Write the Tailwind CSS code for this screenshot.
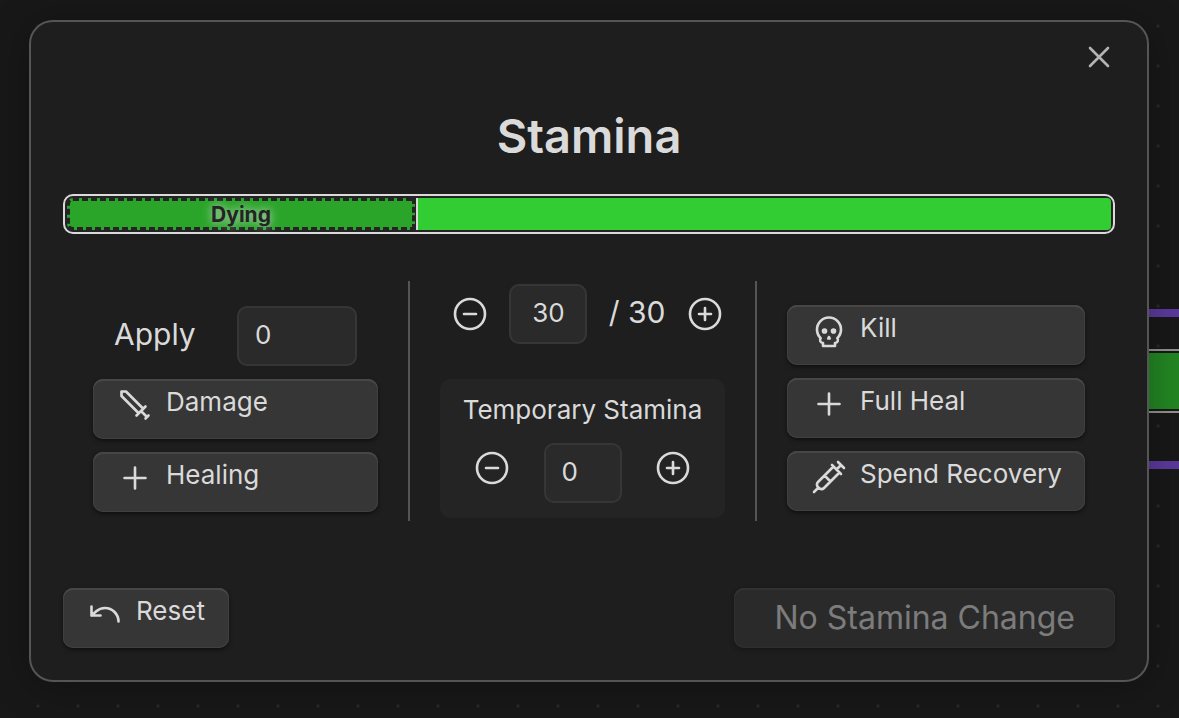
<!DOCTYPE html>
<html lang="en">
<head>
<meta charset="utf-8">
<meta name="viewport" content="width=device-width, initial-scale=1">
<title>Stamina</title>
<script src="https://cdn.jsdelivr.net/npm/@tailwindcss/browser@4"></script>
</head>
<body class="relative min-h-screen overflow-hidden bg-[#181818] pt-5 pr-[30px] pb-9 pl-[29px] font-['Inter',sans-serif] text-[26px] leading-9 text-[#dadada]">
<svg class="hidden" aria-hidden="true">
  <symbol id="plus" viewBox="0 0 24 24"><path d="M5 12h14M12 5v14"/></symbol>
  <symbol id="circle-minus" viewBox="0 0 24 24"><circle cx="12" cy="12" r="10"/><path d="M8 12h8"/></symbol>
  <symbol id="circle-plus" viewBox="0 0 24 24"><circle cx="12" cy="12" r="10"/><path d="M8 12h8M12 8v8"/></symbol>
  <symbol id="x" viewBox="0 0 24 24"><path d="M18 6 6 18M6 6l12 12"/></symbol>
  <symbol id="sword" viewBox="0 0 24 24"><path d="M14.5 17.5 3 6V3h3l11.5 11.5M13 19l6-6M16 16l4 4M19 21l2-2"/></symbol>
  <symbol id="skull" viewBox="0 0 24 24"><circle cx="9" cy="12" r="1"/><circle cx="15" cy="12" r="1"/><path d="M8 20v2h8v-2M12.5 17l-.5-1-.5 1h1zM16 20a2 2 0 0 0 1.56-3.25 8 8 0 1 0-11.12 0A2 2 0 0 0 8 20"/></symbol>
  <symbol id="syringe" viewBox="0 0 24 24"><path d="m18 2 4 4M17 7l3-3M19 9 8.7 19.3c-1 1-2.5 1-3.4 0l-.6-.6c-1-1-1-2.5 0-3.4L15 5M9 11l4 4M5 19l-3 3M14 4l6 6"/></symbol>
  <symbol id="undo" viewBox="0 0 24 24"><path d="M3 7v6h6M21 17a9 9 0 0 0-9-9 9 9 0 0 0-6 2.3L3 13"/></symbol>
</svg>

<!-- Canvas behind the dialog -->
<div class="absolute inset-0 bg-[radial-gradient(circle_at_20px_20px,#2a2a2a_1px,transparent_2px)] bg-size-[40px_40px] bg-position-[18px_6px]" aria-hidden="true">
  <div class="absolute top-[309px] right-0 h-2 w-12 bg-[#5b3a9c]"></div>
  <div class="absolute top-[349px] right-0 h-16 w-12 border-y-2 border-[#919191] py-0.5"><div class="h-full bg-[#238623]"></div></div>
  <div class="absolute top-[461px] right-0 h-2 w-12 bg-[#5b3a9c]"></div>
</div>

<div role="dialog" aria-labelledby="title" class="relative rounded-3xl border-2 border-[#555555] bg-[#1e1e1e] px-8 pt-[17px] pb-8 shadow-[0_4px_40px_rgba(0,0,0,0.3)] [&_svg]:size-9 [&_svg]:shrink-0 [&_svg]:fill-none [&_svg]:stroke-current [&_svg]:stroke-[1.75] [&_svg]:[stroke-linecap:round] [&_svg]:[stroke-linejoin:round]">
  <div class="flex h-9 justify-end">
    <button aria-label="Close" class="-mr-0.5 text-[#b3b3b3]"><svg><use href="#x"/></svg></button>
  </div>
  <h1 id="title" class="mt-[31px] text-center text-[47px] leading-[60px] font-semibold">Stamina</h1>

  <div class="mt-7 flex h-10 overflow-hidden rounded-[10px] border-2 border-[#dadada] bg-[#242424] p-0.5">
    <div class="mr-px flex w-1/3 items-center justify-center rounded-l-md border-3 border-dashed border-[#242424] bg-[#2aa52a] pt-0.5 text-[21px] font-bold text-[#242424] [text-shadow:0_0_10px_#dadada]">Dying</div>
    <div class="flex-1 rounded-r-sm border-l-2 border-[#dadada] bg-[#32cd32]"></div>
  </div>

  <div class="mt-[47px] grid h-60 grid-cols-[minmax(0,347fr)_minmax(0,347fr)_minmax(0,358fr)]">
    <div class="flex flex-col justify-center border-r-2 border-[#555555] px-[30px] pt-4">
      <div class="mb-[13px] flex items-center justify-between px-[21px]">
        <label for="apply" class="pb-1 text-3xl leading-9">Apply</label>
        <input id="apply" value="0" class="h-[60px] w-[120px] rounded-[10px] border-2 border-[#363636] bg-[#2a2a2a] px-4 pb-1">
      </div>
      <button class="mb-[13px] flex h-[60px] items-start gap-[13px] rounded-[10px] bg-[#363636] px-6 pt-2 shadow-[inset_0_2px_1px_#484848,inset_0_0_0_1px_#404040,0_2px_4px_rgba(0,0,0,0.5)]"><svg><use href="#sword"/></svg><span class="-mt-[3px]">Damage</span></button>
      <button class="flex h-[60px] items-start gap-[13px] rounded-[10px] bg-[#363636] px-6 pt-2 shadow-[inset_0_2px_1px_#484848,inset_0_0_0_1px_#404040,0_2px_4px_rgba(0,0,0,0.5)]"><svg><use href="#plus"/></svg><span class="-mt-[3px]">Healing</span></button>
    </div>

    <div class="flex flex-col border-r-2 border-[#555555] px-[30px] py-[3px]">
      <div class="flex items-center justify-between pr-0.5 pl-3">
        <button aria-label="Decrease stamina"><svg><use href="#circle-minus"/></svg></button>
        <input aria-label="Current stamina" value="30" class="h-[60px] w-[78px] rounded-[10px] border-2 border-[#363636] bg-[#2a2a2a] pb-1 text-center">
        <span class="pb-1 text-3xl leading-9">/ 30</span>
        <button aria-label="Increase stamina"><svg><use href="#circle-plus"/></svg></button>
      </div>
      <div class="mt-[35px] flex-1 rounded-[10px] bg-[#242424] pt-[13px]">
        <div class="text-center"><label for="temp">Temporary Stamina</label></div>
        <div class="mt-[15px] flex items-start justify-between px-[34px]">
          <button aria-label="Decrease temporary stamina" class="mt-[7px]"><svg><use href="#circle-minus"/></svg></button>
          <input id="temp" value="0" class="h-[60px] w-[78px] rounded-[10px] border-2 border-[#363636] bg-[#2a2a2a] px-4 pb-1">
          <button aria-label="Increase temporary stamina" class="mt-[7px]"><svg><use href="#circle-plus"/></svg></button>
        </div>
      </div>
    </div>

    <div class="flex flex-col gap-[13px] px-[30px] pt-6">
      <button class="flex h-[60px] items-start gap-[13px] rounded-[10px] bg-[#363636] px-6 pt-2 shadow-[inset_0_2px_1px_#484848,inset_0_0_0_1px_#404040,0_2px_4px_rgba(0,0,0,0.5)]"><svg><use href="#skull"/></svg><span class="-mt-[3px]">Kill</span></button>
      <button class="flex h-[60px] items-start gap-[13px] rounded-[10px] bg-[#363636] px-6 pt-2 shadow-[inset_0_2px_1px_#484848,inset_0_0_0_1px_#404040,0_2px_4px_rgba(0,0,0,0.5)]"><svg><use href="#plus"/></svg><span class="-mt-[3px]">Full Heal</span></button>
      <button class="flex h-[60px] items-start gap-[13px] rounded-[10px] bg-[#363636] px-6 pt-2 whitespace-nowrap shadow-[inset_0_2px_1px_#484848,inset_0_0_0_1px_#404040,0_2px_4px_rgba(0,0,0,0.5)]"><svg><use href="#syringe"/></svg><span class="-mt-[3px]">Spend Recovery</span></button>
    </div>
  </div>

  <div class="mt-[67px] flex justify-between">
    <button class="flex h-[60px] items-start gap-[13px] rounded-[10px] bg-[#363636] px-6 pt-2 shadow-[inset_0_2px_1px_#484848,inset_0_0_0_1px_#404040,0_2px_4px_rgba(0,0,0,0.5)]"><svg><use href="#undo"/></svg><span class="-mt-[3px]">Reset</span></button>
    <button disabled class="h-[60px] rounded-[10px] bg-[#363636] px-10 text-[32px] opacity-50 shadow-[inset_0_2px_1px_#484848,inset_0_0_0_1px_#404040,0_2px_4px_rgba(0,0,0,0.5)]">No Stamina Change</button>
  </div>
</div>
</body>
</html>
